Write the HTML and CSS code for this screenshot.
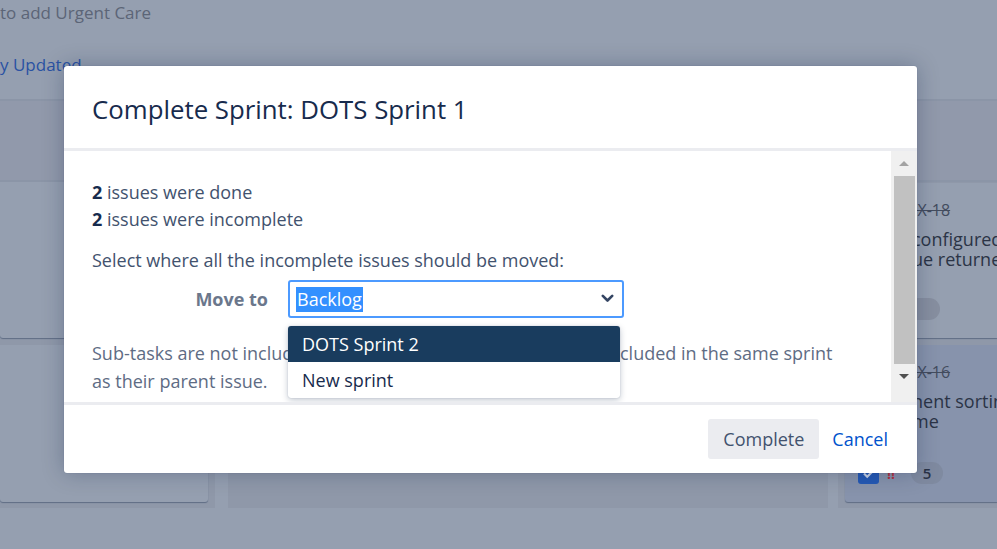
FILE: index.html
```html
<!DOCTYPE html>
<html lang="en">
<head>
<meta charset="utf-8">
<title>Complete Sprint</title>
<link rel="stylesheet" href="styles.css">
</head>
<body>
<div class="board">
  <div class="topbar">
    <div class="crumb">to add Urgent Care</div>
    <div class="updated">y Updated</div>
  </div>
  <div class="colheads"></div>
  <div class="columns">
    <div class="col col-a">
      <div class="card card-a1"></div>
      <div class="card card-a2"></div>
    </div>
    <div class="col col-b"></div>
    <div class="col col-c">
      <div class="card card-c1">
        <div class="card-key">OX-18</div>
        <div class="card-summary">configured<br>ue returned</div>
        <div class="card-foot"><span class="pill pill-empty"></span></div>
      </div>
      <div class="card card-c2">
        <div class="card-key">OX-16</div>
        <div class="card-summary">nent sorting<br>me</div>
        <div class="card-foot">
          <span class="check-icon"><svg width="21" height="21" viewBox="0 0 21 21"><rect width="21" height="21" rx="3" fill="#2559b4"/><path d="M6 10.5l3.2 3.2L15 8" fill="none" stroke="#c9d3e6" stroke-width="2.2"/></svg></span>
          <span class="prio">!!</span>
          <span class="pill">5</span>
        </div>
      </div>
    </div>
  </div>
</div>

<div class="modal">
  <div class="modal-header">
    <h2 class="modal-title">Complete Sprint: DOTS Sprint 1</h2>
  </div>
  <div class="modal-body">
    <div class="body-content">
      <p class="stat"><b>2</b> issues were done</p>
      <p class="stat"><b>2</b> issues were incomplete</p>
      <p class="prompt">Select where all the incomplete issues should be moved:</p>
      <div class="move-row">
        <label class="move-label">Move to</label>
        <div class="select-wrap">
          <div class="select">
            <span class="selected-text">Backlog</span>
            <svg class="chevron" width="13" height="9" viewBox="0 0 13 9"><path d="M1.8 1.8L6.5 6.5L11.2 1.8" fill="none" stroke="#344563" stroke-width="2.6" stroke-linecap="round" stroke-linejoin="round"/></svg>
          </div>
          <ul class="dropdown">
            <li class="option active">DOTS Sprint 2</li>
            <li class="option">New sprint</li>
          </ul>
        </div>
      </div>
      <p class="note">Sub-tasks are not included in the total above, and are always included in the same sprint as their parent issue.</p>
    </div>
    <div class="scrollbar">
      <div class="sb-arrow sb-up"></div>
      <div class="sb-thumb"></div>
      <div class="sb-arrow sb-down"></div>
    </div>
  </div>
  <div class="modal-footer">
    <button class="btn btn-complete">Complete</button>
    <button class="btn btn-link">Cancel</button>
  </div>
</div>
</body>
</html>
```

FILE: styles.css
```css
* { box-sizing: border-box; }

html, body {
  margin: 0;
  padding: 0;
  width: 997px;
  height: 549px;
  overflow: hidden;
}

body {
  background: #959fb0;
  font-family: "Open Sans", "Noto Sans", sans-serif;
  font-size: 18px;
  color: #172b4d;
}

/* ---------- dimmed board behind ---------- */
.board {
  display: flex;
  flex-direction: column;
}

.topbar {
  height: 101px;
  border-bottom: 2px solid #8b95a7;
}

.crumb {
  font-size: 17px;
  color: #5c6577;
  line-height: 26px;
}

.updated {
  font-size: 17px;
  color: #2a52a3;
  line-height: 26px;
  margin-top: 26px;
}

.colheads {
  height: 81px;
  background: #9199ab;
  border-bottom: 2px solid #8b95a7;
}

.columns {
  display: flex;
  height: 326px;
}

.col {
  background: #8f98a9;
  display: flex;
  flex-direction: column;
  gap: 7px;
  flex-shrink: 0;
}

.col-a {
  width: 215px;
  padding: 0 7px 6px 0;
}

.col-b {
  width: 600px;
  margin-left: 13px;
}

.col-c {
  flex: 1 1 0;
  min-width: 0;
  margin-left: 10px;
  padding: 1px 0 6px 7px;
}

.card {
  background: #959fb0;
  border-radius: 0 0 3px 3px;
  box-shadow: 0 1px 1px rgba(9, 30, 66, 0.35);
}

.card-a1 { height: 156px; }
.card-a2 { height: 157px; }

.card-c1 {
  height: 155px;
  border-radius: 3px 0 0 3px;
  padding: 16px 0 0 67px;
}

.card-c2 {
  height: 157px;
  background: #8793ac;
  border-radius: 3px 0 0 3px;
  padding: 16px 0 0 67px;
}

.card-key {
  font-size: 16px;
  color: #434c5e;
  text-decoration: line-through;
  line-height: 22px;
  margin-left: -7px;
  white-space: nowrap;
}

.card-summary {
  font-size: 18px;
  color: #2b3446;
  line-height: 20px;
  margin-top: 8px;
  white-space: nowrap;
}

.card-foot {
  display: flex;
  align-items: center;
  margin-top: 31px;
  gap: 8px;
  margin-left: -54px;
}

.card-c1 .card-foot { margin-left: -12px; margin-top: 29px; }

.check-icon { display: inline-flex; }

.prio {
  color: #b5303e;
  font-size: 14px;
  font-weight: 700;
  width: 16px;
}

.pill {
  display: inline-flex;
  align-items: center;
  justify-content: center;
  min-width: 32px;
  height: 22px;
  padding: 0 8px;
  border-radius: 11px;
  background: #7f8aa0;
  color: #2a3347;
  font-size: 15px;
  font-weight: 600;
}

.pill-empty {
  width: 40px;
  background: #878fa0;
}

/* ---------- modal ---------- */
.modal {
  position: absolute;
  left: 64px;
  top: 66px;
  width: 853px;
  height: 407px;
  background: #fff;
  border-radius: 3px;
  box-shadow: 0 0 22px rgba(9, 30, 66, 0.28), 0 0 1px rgba(9, 30, 66, 0.3);
  display: flex;
  flex-direction: column;
  overflow: hidden;
}

.modal-header {
  height: 85px;
  display: flex;
  align-items: center;
  padding: 3px 28px 0;
  border-bottom: 3px solid #ebecf0;
}

.modal-title {
  margin: 0;
  font-size: 25.8px;
  font-weight: 500;
  color: #172b4d;
  line-height: 32px;
}

.modal-body {
  display: flex;
  height: 254px;
  border-bottom: 3px solid #ebecf0;
}

.body-content {
  flex: 1;
  overflow: hidden;
  padding: 28px 28px 0;
  color: #42526e;
  line-height: 27px;
}

.body-content p { margin: 0; }

.stat b {
  color: #172b4d;
  font-weight: 700;
}

.prompt { margin-top: 14px !important; }

.move-row {
  display: flex;
  align-items: center;
  gap: 20px;
  margin-top: 6px;
}

.move-label {
  width: 176px;
  text-align: right;
  font-weight: 700;
  color: #6b778c;
}

.select-wrap {
  position: relative;
}

.select {
  width: 336px;
  height: 38px;
  border: 2px solid #4c9aff;
  border-radius: 3px;
  display: flex;
  align-items: center;
  justify-content: space-between;
  padding: 0 8px 0 6px;
}

.selected-text {
  background: #3390ff;
  color: #fff;
  line-height: 25px;
  padding: 0 1px;
}

.chevron { margin-bottom: 1px; }

.dropdown {
  position: absolute;
  left: 0;
  top: 46px;
  width: 332px;
  margin: 0;
  padding: 0;
  list-style: none;
  background: #fff;
  border-radius: 3px;
  box-shadow: 0 2px 6px rgba(9, 30, 66, 0.25), 0 0 1px rgba(9, 30, 66, 0.3);
  overflow: hidden;
  z-index: 2;
}

.option {
  height: 36px;
  line-height: 36px;
  padding-left: 14px;
  color: #172b4d;
}

.option.active {
  background: #193c5e;
  color: #fff;
}

.note {
  margin-top: 21px !important;
  color: #5e6c84;
  line-height: 28px;
  max-width: 755px;
}

/* classic scrollbar */
.scrollbar {
  width: 26px;
  background: #f0f0f0;
  display: flex;
  flex-direction: column;
  align-items: center;
  padding: 0 1px 0 0;
}

.sb-arrow {
  height: 25px;
  width: 100%;
  display: flex;
  align-items: center;
  justify-content: center;
}

.sb-up::before {
  content: "";
  border-left: 5px solid transparent;
  border-right: 5px solid transparent;
  border-bottom: 5px solid #a3a3a3;
}

.sb-down::before {
  content: "";
  border-left: 5px solid transparent;
  border-right: 5px solid transparent;
  border-top: 5px solid #505050;
}

.sb-thumb {
  width: 21px;
  height: 188px;
  background: #c1c1c1;
  margin-left: 1px;
}

.modal-footer {
  flex: 1;
  display: flex;
  align-items: center;
  justify-content: flex-end;
  gap: 6px;
  padding: 0 22px 1px 0;
}

.btn {
  font-family: inherit;
  font-size: 18px;
  border: 0;
  border-radius: 3px;
  height: 40px;
  padding: 0 15px;
  background: transparent;
}

.btn-complete {
  background: #ebecf0;
  color: #42526e;
  width: 111px;
}

.btn-link {
  color: #0052cc;
  padding: 0 7px;
}
```
